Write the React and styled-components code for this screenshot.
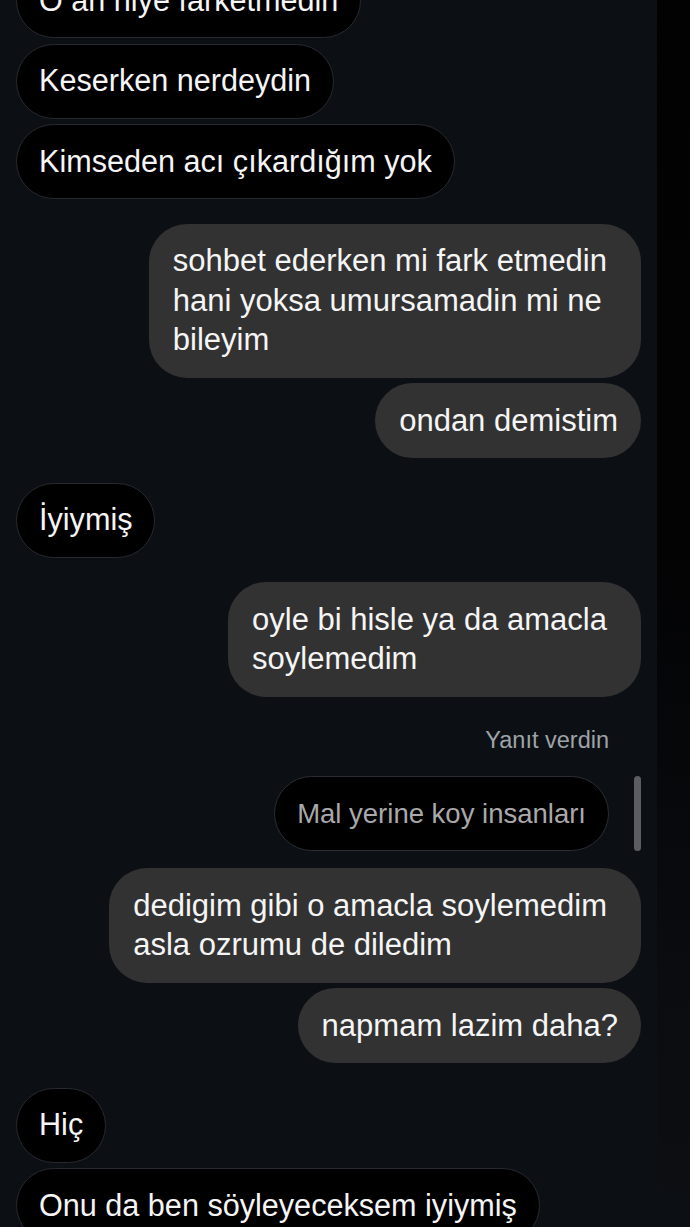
import React from 'react';
import styled, { createGlobalStyle } from 'styled-components';

const GlobalStyle = createGlobalStyle`
  html, body {
    margin: 0;
    padding: 0;
    background: #0c1014;
  }
  * {
    box-sizing: border-box;
  }
`;

const Page = styled.div`
  display: flex;
  height: 1227px;
  overflow: hidden;
  background: #0c1014;
  font-family: "Liberation Sans", Arial, sans-serif;
`;

const Thread = styled.div`
  width: 657px;
  display: flex;
  flex-direction: column;
  padding: 0 16px;
  margin-top: -37px;
`;

const Edge = styled.div`
  flex: 1;
  background: linear-gradient(#020202 0%, #030304 45%, #0a0c0f 80%, #0c0f13 100%);
`;

const Group = styled.div`
  display: flex;
  flex-direction: column;
  align-items: ${props => (props.$mine ? 'flex-end' : 'flex-start')};
  gap: 5.5px;
  margin-top: ${props => (props.$first ? 0 : 24.5)}px;
`;

const Bubble = styled.div`
  white-space: pre-line;
  font-size: ${props => (props.$mine ? 31 : 30.6)}px;
  line-height: 39.5px;
  color: #f5f5f5;
  border-radius: 38px;
  padding: ${props => (props.$mine ? '17.75px 24px' : '16.75px 22px')};
  padding-right: ${props => (props.$wrapped ? 34 : props.$mine ? 23 : 22)}px;
  background: ${props => (props.$mine ? '#323232' : '#000')};
  border: ${props => (props.$mine ? 'none' : '1px solid #262a2f')};
`;

const ReplyBlock = styled.div`
  display: flex;
  flex-direction: column;
  align-items: flex-end;
  margin-bottom: 11.5px;
`;

const ReplyLabel = styled.div`
  font-size: 23.5px;
  line-height: 38px;
  color: #9ea3a8;
  padding-right: 32px;
  margin-bottom: 17px;
`;

const QuoteRow = styled.div`
  display: flex;
  align-items: stretch;
  gap: 25px;
`;

const Quote = styled.div`
  font-size: 27.5px;
  line-height: 39.5px;
  color: #a9a9ab;
  background: #000;
  border: 1px solid #2a2e33;
  border-radius: 38px;
  padding: 16.75px 22px;
`;

const QuoteBar = styled.div`
  width: 7px;
  border-radius: 4px;
  background: #5c5d61;
`;

export default function App() {
  return (
    <>
      <GlobalStyle />
      <Page>
        <Thread>
          <Group $first>
            <Bubble>O an niye farketmedin</Bubble>
            <Bubble>Keserken nerdeydin</Bubble>
            <Bubble>Kimseden acı çıkardığım yok</Bubble>
          </Group>

          <Group $mine>
            <Bubble $mine $wrapped>
              {'sohbet ederken mi fark etmedin\nhani yoksa umursamadin mi ne\nbileyim'}
            </Bubble>
            <Bubble $mine>ondan demistim</Bubble>
          </Group>

          <Group>
            <Bubble>İyiymiş</Bubble>
          </Group>

          <Group $mine>
            <Bubble $mine $wrapped>
              {'oyle bi hisle ya da amacla\nsoylemedim'}
            </Bubble>
          </Group>

          <Group $mine>
            <ReplyBlock>
              <ReplyLabel>Yanıt verdin</ReplyLabel>
              <QuoteRow>
                <Quote>Mal yerine koy insanları</Quote>
                <QuoteBar />
              </QuoteRow>
            </ReplyBlock>
            <Bubble $mine $wrapped>
              {'dedigim gibi o amacla soylemedim\nasla ozrumu de diledim'}
            </Bubble>
            <Bubble $mine>napmam lazim daha?</Bubble>
          </Group>

          <Group>
            <Bubble>Hiç</Bubble>
            <Bubble>Onu da ben söyleyeceksem iyiymiş</Bubble>
          </Group>
        </Thread>
        <Edge />
      </Page>
    </>
  );
}
